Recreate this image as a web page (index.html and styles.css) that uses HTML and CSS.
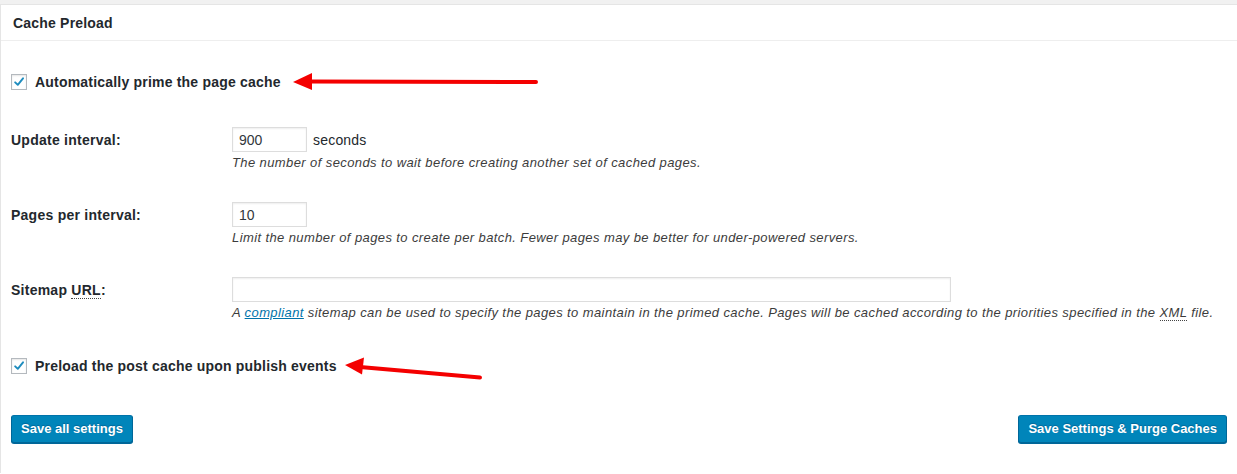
FILE: index.html
```html
<!DOCTYPE html>
<html>
<head>
<meta charset="utf-8">
<link rel="stylesheet" href="styles.css">
</head>
<body>
<div class="topbar"></div>
<div class="panel">
  <h3 class="panel-title">Cache Preload</h3>
  <div class="panel-body">
    <label class="check-row first">
      <span class="cb"><svg viewBox="0 0 16 16" width="16" height="16"><path d="M3.6 8.4 L6.6 11.2 L12.6 3.8" fill="none" stroke="#1e8cbe" stroke-width="2.2" stroke-linecap="round" stroke-linejoin="round"/></svg></span>
      <span class="check-label">Automatically prime the page cache</span>
    </label>

    <div class="form-row r1">
      <div class="row-label">Update interval:</div>
      <div class="row-field">
        <div class="field-line"><span class="input small">900</span><span class="unit">seconds</span></div>
        <p class="desc">The number of seconds to wait before creating another set of cached pages.</p>
      </div>
    </div>

    <div class="form-row r2">
      <div class="row-label">Pages per interval:</div>
      <div class="row-field">
        <div class="field-line"><span class="input small">10</span></div>
        <p class="desc">Limit the number of pages to create per batch. Fewer pages may be better for under-powered servers.</p>
      </div>
    </div>

    <div class="form-row r3">
      <div class="row-label">Sitemap <abbr class="abbr">URL</abbr>:</div>
      <div class="row-field">
        <div class="field-line"><span class="input wide"></span></div>
        <p class="desc">A <a class="link" href="#">compliant</a> sitemap can be used to specify the pages to maintain in the primed cache. Pages will be cached according to the priorities specified in the <abbr class="abbr">XML</abbr> file.</p>
      </div>
    </div>

    <label class="check-row second">
      <span class="cb"><svg viewBox="0 0 16 16" width="16" height="16"><path d="M3.6 8.4 L6.6 11.2 L12.6 3.8" fill="none" stroke="#1e8cbe" stroke-width="2.2" stroke-linecap="round" stroke-linejoin="round"/></svg></span>
      <span class="check-label">Preload the post cache upon publish events</span>
    </label>

    <div class="actions">
      <button class="btn">Save all settings</button>
      <button class="btn">Save Settings &amp; Purge Caches</button>
    </div>
  </div>
</div>
<svg class="arrows" width="1237" height="474" viewBox="0 0 1237 474">
  <line x1="310" y1="81.5" x2="536" y2="82" stroke="#f40000" stroke-width="4" stroke-linecap="round"/>
  <polygon points="293,82 312,73 312,90" fill="#f40000"/>
  <line x1="360" y1="367" x2="480" y2="377.5" stroke="#f40000" stroke-width="4" stroke-linecap="round"/>
  <polygon points="345,365 364,357.5 362,374.5" fill="#f40000"/>
</svg>
</body>
</html>
```
FILE: styles.css
```css
html, body {
  margin: 0;
  padding: 0;
  background: #fff;
  font-family: "Liberation Sans", Arial, sans-serif;
  color: #23282d;
  overflow: hidden;
}
body {
  width: 1237px;
  height: 474px;
  position: relative;
}
.topbar {
  height: 4px;
  background: #f1f1f1;
}
.panel {
  border-top: 1px solid #e5e5e5;
  border-left: 1px solid #e5e5e5;
  background: #fff;
  height: 469px;
  box-sizing: border-box;
}
.panel-title {
  margin: 0;
  height: 35px;
  line-height: 36px;
  padding-left: 12px;
  font-size: 14px;
  font-weight: 700;
  letter-spacing: 0.2px;
  color: #23282d;
  border-bottom: 1px solid #eeeeee;
}
.panel-body {
  padding: 0 10px 0 10px;
}
.check-row {
  display: flex;
  align-items: center;
  height: 16px;
}
.check-row.first { margin-top: 33px; }
.check-row.second { margin-top: 37px; }
.cb {
  width: 14px;
  height: 14px;
  border: 1px solid #b4b9be;
  background: #fff;
  box-shadow: inset 0 1px 2px rgba(0,0,0,.1);
  display: inline-flex;
  align-items: center;
  justify-content: center;
  position: relative;
}
.cb svg { width: 14px; height: 14px; }
.check-label {
  margin-left: 8px;
  font-size: 14px;
  font-weight: 700;
  letter-spacing: 0.2px;
  color: #23282d;
}
.form-row {
  display: grid;
  grid-template-columns: 221px 1fr;
}
.r1 { margin-top: 37px; }
.r2 { margin-top: 31px; }
.r3 { margin-top: 31px; }
.row-label {
  font-size: 14px;
  font-weight: 700;
  letter-spacing: 0.25px;
  height: 25px;
  line-height: 27px;
}
.field-line {
  display: flex;
  align-items: center;
  height: 25px;
}
.input {
  display: inline-block;
  box-sizing: border-box;
  height: 25px;
  line-height: 24px;
  border: 1px solid #ddd;
  box-shadow: inset 0 1px 2px rgba(0,0,0,.07);
  padding: 0 6px;
  font-size: 14px;
  color: #32373c;
  background: #fff;
}
.input.small { width: 75px; }
.input.wide { width: 719px; }
.unit {
  margin-left: 6px;
  font-size: 14px;
  letter-spacing: 0.2px;
  color: #23282d;
  line-height: 24px;
}
.desc {
  margin: 2px 0 -1px 0;
  font-size: 13px;
  line-height: 18px;
  font-style: italic;
  letter-spacing: 0.4px;
  color: #3c3c3c;
}
.abbr {
  text-decoration: none;
  border-bottom: 1px dotted #444;
}
.link {
  color: #0073aa;
  text-decoration: underline;
}
.actions {
  display: flex;
  justify-content: space-between;
  margin-top: 41px;
}
.btn {
  height: 28px;
  box-sizing: border-box;
  padding: 0 9px;
  background: #0085ba;
  border: 1px solid;
  border-color: #0073aa #006799 #006799;
  border-radius: 3px;
  box-shadow: 0 1px 0 #006799;
  color: #fff;
  font-family: "Liberation Sans", Arial, sans-serif;
  font-size: 13px;
  font-weight: 700;
  line-height: 26px;
  text-shadow: 0 -1px 1px #006799;
}
.arrows {
  position: absolute;
  left: 0;
  top: 0;
  pointer-events: none;
}
```
